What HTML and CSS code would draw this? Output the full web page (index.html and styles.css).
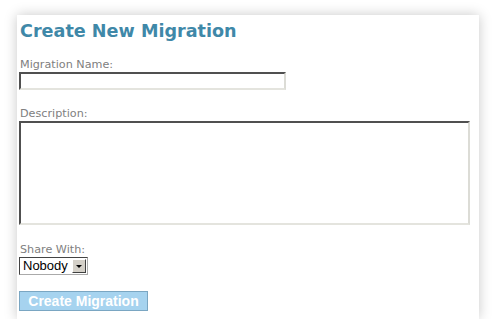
FILE: index.html
```html
<!DOCTYPE html>
<html lang="en">
<head>
  <meta charset="UTF-8">
  <title>Create New Migration</title>
  <link rel="stylesheet" href="styles.css">
</head>
<body>
  <div id="panel">
    <h1>Create New Migration</h1>

    <form id="migrationForm">
      <label for="name">Migration Name:</label>
      <input type="text" id="name" class="field name-field">

      <label for="desc" class="gap">Description:</label>
      <textarea id="desc" class="field desc-field"></textarea>

      <label for="share" class="gap gap-wide">Share With:</label>
      <div class="select-box">
        <span class="select-value">Nobody</span>
        <span class="select-arrow"></span>
      </div>

      <button type="button" class="submit">Create Migration</button>
    </form>
  </div>
</body>
</html>
```

FILE: styles.css
```css
body {
  margin: 0;
  padding: 0;
  background: #fff;
  font-family: 'DejaVu Sans', Verdana, sans-serif;
}

#panel {
  width: 462px;
  height: 304px;
  margin: 15px 0 0 17px;
  background: #fff;
  box-shadow: 0 0 12px rgba(0,0,0,0.22);
  box-sizing: border-box;
  padding: 5px 0 0 2px;
}

h1 {
  margin: 0;
  font-size: 17.6px;
  line-height: 22px;
  font-weight: bold;
  color: #3f88a8;
  padding-left: 1px;
}

#migrationForm {
  display: flex;
  flex-direction: column;
  align-items: flex-start;
  margin-top: 16px;
}

label {
  font-size: 11.2px;
  line-height: 13px;
  color: #808080;
  padding-left: 1px;
}

label.gap {
  margin-top: 17px;
}

label.gap-wide {
  margin-top: 18px;
}

.field {
  box-sizing: border-box;
  margin: 1px 0 0;
  padding: 0 2px;
  border: 2px solid;
  border-color: #505050 #dcdcd6 #e4e4de #505050;
  background: #fff;
  font-family: inherit;
  font-size: 12px;
  outline: none;
}

.name-field {
  width: 267px;
  height: 18px;
}

.desc-field {
  width: 451px;
  height: 104px;
  resize: none;
}

.select-box {
  display: flex;
  align-items: center;
  box-sizing: border-box;
  width: 69px;
  height: 18px;
  margin-top: 1px;
  border: 1px solid #444;
  border-right-color: #aaa;
  border-bottom-color: #aaa;
  background: #fff;
}

.select-value {
  flex: 1;
  font-family: 'Liberation Sans', Arial, sans-serif;
  font-size: 13px;
  line-height: 16px;
  color: #000;
  padding-left: 3px;
}

.select-arrow {
  position: relative;
  width: 14px;
  height: 14px;
  margin-right: 1px;
  box-sizing: border-box;
  background: #d4d0c8;
  border: 1px solid;
  border-color: #fff #404040 #404040 #fff;
}

.select-arrow::after {
  content: "";
  position: absolute;
  left: 3px;
  top: 5px;
  border-left: 3px solid transparent;
  border-right: 3px solid transparent;
  border-top: 3px solid #000;
}

.submit {
  margin-top: 16px;
  width: 129px;
  height: 20px;
  padding: 0;
  border: 1px solid #7aa6c2;
  background: #a6d3ef;
  color: #fff;
  font-family: 'Liberation Sans', Arial, sans-serif;
  font-size: 14px;
  font-weight: bold;
  cursor: pointer;
}
```
